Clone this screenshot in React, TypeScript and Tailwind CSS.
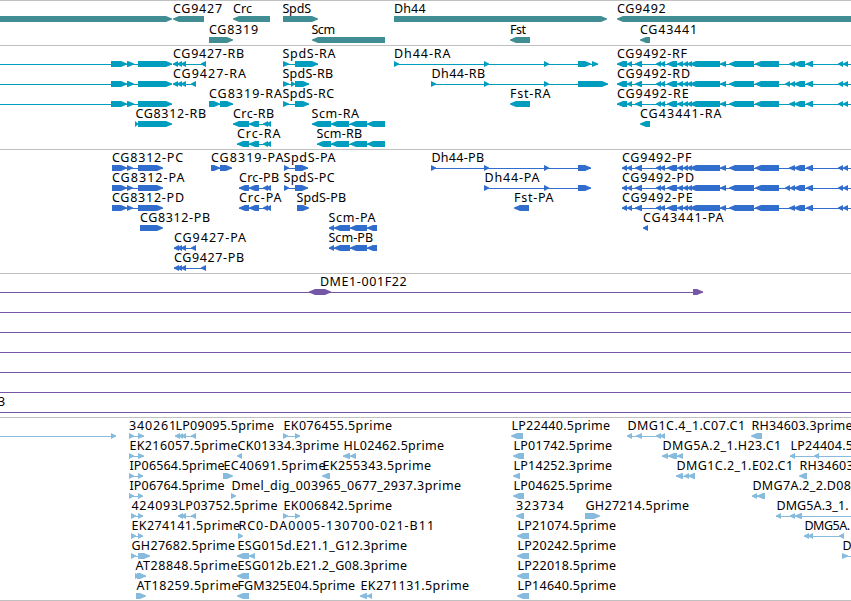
type Strand = '+' | '-' | 'both';
type Block = [number, number];

interface Feature {
  row: number;
  name?: string;
  // left and right edge of the name, in pixels
  text?: Block;
  strand: Strand;
  blocks: Block[];
}

interface TrackProps {
  color: string;
  height: number;
  rowHeight?: number;
  top?: number;
  features: Feature[];
}

const WIDTH = 851;
const EDGE: Block = [870, 880];

const f = (row: number, name: string, text: Block, strand: Strand, blocks: Block[]): Feature => ({
  row,
  name,
  text,
  strand,
  blocks,
});

const genes: Feature[] = [
  { row: 0, strand: '+', blocks: [[-10, 172]] },
  f(0, 'CG9427', [173.5, 221.5], '-', [[173, 204]]),
  f(0, 'Crc', [233.5, 251.5], '-', [[233, 270]]),
  f(0, 'SpdS', [283, 310.5], '+', [[283, 318]]),
  f(0, 'Dh44', [394.5, 425], '+', [[394, 607]]),
  f(0, 'CG9492', [617.5, 665], '-', [[617, 880]]),
  f(1, 'CG8319', [209.5, 257.5], '+', [[209, 233]]),
  f(1, 'Scm', [312, 334.5], '-', [[312, 385]]),
  f(1, 'Fst', [510.7, 525.5], '-', [[510, 530]]),
  f(1, 'CG43441', [640.5, 696.5], '-', [[640, 650]]),
];

const cg8312: Block[] = [[-20, -10], [111, 127], [127, 134], [138, 172]];
const cg9427: Block[] = [[173, 178], [177, 182], [181, 186]];
const crcTail: Block[] = [[249, 259], [263, 268], [266, 271]];
const scmTail: Block[] = [[331, 349], [350, 367], [367, 385]];
const cg9492Mid: Block[] = [
  [627, 632], [635, 642], [656, 661], [660, 665], [667, 677], [677, 683], [683, 688],
  [687, 692], [690, 720], [720, 726], [729, 754], [755, 779],
];
const cg9492End: Block[] = [[794, 805], [806, 813], [838, 843], [843, 848], EDGE];
const cg9492F: Block[] = [...cg9492Mid, [789, 795], ...cg9492End];
const cg9492D: Block[] = [...cg9492Mid, [785, 790], [790, 795], ...cg9492End];

const transcripts: Feature[] = [
  { row: 0, strand: '+', blocks: cg8312 },
  { row: 1, strand: '+', blocks: cg8312 },
  { row: 2, strand: '+', blocks: cg8312 },
  f(0, 'CG9427-RB', [173.5, 243.5], '-', [...cg9427, [201, 206]]),
  f(1, 'CG9427-RA', [173.5, 245.5], '-', [...cg9427, [191, 196]]),
  f(2, 'CG8319-RA', [209.5, 281.5], '+', [[209, 220], [220, 233]]),
  f(3, 'CG8312-RB', [136, 205.5], '+', [[135, 138], [138, 172]]),
  f(3, 'Crc-RB', [233.5, 273.5], '-', [[233, 249], ...crcTail]),
  f(4, 'Crc-RA', [237.5, 280], '-', [[237, 249], ...crcTail]),
  f(0, 'SpdS-RA', [283, 335], '+', [[283, 289], [295, 318]]),
  f(1, 'SpdS-RB', [283, 332.5], '+', [[283, 289], [291, 295], [295, 309]]),
  f(2, 'SpdS-RC', [283, 333.5], '+', [[283, 289], [295, 309]]),
  f(3, 'Scm-RA', [312, 358.5], '-', [[312, 331], ...scmTail]),
  f(4, 'Scm-RB', [317, 361.5], '-', [[317, 331], ...scmTail]),
  f(0, 'Dh44-RA', [394.5, 450], '+', [[394, 399], [484, 489], [544, 549], [578, 591], [592, 598]]),
  f(1, 'Dh44-RB', [432, 484.5], '+', [[431, 436], [484, 489], [544, 549], [578, 608]]),
  f(2, 'Fst-RA', [510.7, 550], '-', [[510, 530]]),
  f(0, 'CG9492-RF', [617.5, 686.5], '-', [[617, 627], ...cg9492F]),
  f(1, 'CG9492-RD', [617.5, 689.5], '-', [[617, 627], ...cg9492D]),
  f(2, 'CG9492-RE', [617.5, 688], '-', [[617, 627], ...cg9492F]),
  f(3, 'CG43441-RA', [640.5, 721], '-', [[640, 650]]),
];

const cg8312P: Block[] = [[112, 127], [127, 133], [138, 163]];
const cg9427P: Block[] = [[174, 179], [177, 182], [181, 186]];
const scmP: Block[] = [[329, 334], [334, 350], [350, 367], [367, 377]];

const proteins: Feature[] = [
  f(0, 'CG8312-PC', [112.5, 182.5], '+', cg8312P),
  f(1, 'CG8312-PA', [112.5, 184], '+', cg8312P),
  f(2, 'CG8312-PD', [112.5, 183.5], '+', cg8312P),
  f(3, 'CG8312-PB', [140.5, 209.5], '+', [[140, 163]]),
  f(4, 'CG9427-PA', [174.5, 245.5], '-', [...cg9427P, [191, 196]]),
  f(5, 'CG9427-PB', [174.5, 243.5], '-', [...cg9427P, [201, 206]]),
  f(0, 'CG8319-PA', [211.5, 283], '+', [[211, 220], [220, 232]]),
  f(1, 'Crc-PB', [239.5, 278.5], '-', [[239, 249], ...crcTail]),
  f(2, 'Crc-PA', [239.5, 281], '-', [[239, 249], ...crcTail]),
  f(0, 'SpdS-PA', [284, 335], '+', [[284, 289], [295, 308]]),
  f(1, 'SpdS-PC', [284, 334], '+', [[284, 289], [295, 308]]),
  f(2, 'SpdS-PB', [297, 345.5], '+', [[297, 309]]),
  f(3, 'Scm-PA', [329, 375], '-', scmP),
  f(4, 'Scm-PB', [329, 372.5], '-', scmP),
  f(0, 'Dh44-PB', [432, 483.5], '+', [[431, 436], [484, 489], [544, 549], [578, 591]]),
  f(1, 'Dh44-PA', [485, 539], '+', [[484, 489], [544, 549], [578, 591]]),
  f(2, 'Fst-PA', [514.7, 553], '-', [[514, 529]]),
  f(0, 'CG9492-PF', [622.5, 691], '-', [[622, 627], ...cg9492F]),
  f(1, 'CG9492-PD', [622.5, 693.5], '-', [[622, 627], ...cg9492D]),
  f(2, 'CG9492-PE', [622.5, 692], '-', [[622, 627], ...cg9492F]),
  f(3, 'CG43441-PA', [643.5, 723], '-', [[643, 648]]),
];

const span: Block[] = [[-20, -10], EDGE];

const clones: Feature[] = [
  { row: 0, strand: '+', blocks: [[-20, -10], [693, 703]] },
  f(0, 'DME1-001F22', [320.5, 406], 'both', [[309, 331]]),
  { row: 1, strand: '+', blocks: span },
  { row: 2, strand: '+', blocks: span },
  { row: 3, strand: '+', blocks: span },
  { row: 4, strand: '+', blocks: span },
  { row: 5, strand: '+', blocks: span },
  f(6, '3', [-1.5, 5], '+', span),
];

const ests: Feature[] = [
  { row: 0, strand: '+', blocks: [[-20, -10], [111, 116]] },
  f(0, '340261', [129.5, 175.5], '+', [[129, 134], [138, 144]]),
  f(0, 'LP09095.5prime', [176, 273.5], '-', [[175, 180], [179, 183], [182, 186], [191, 196]]),
  f(0, 'EK076455.5prime', [284, 391.5], '+', [[283, 288], [295, 300]]),
  f(0, 'LP22440.5prime', [512, 609.5], '-', [[511, 523]]),
  f(0, 'DMG1C.4_1.C07.C1', [628, 744.5], '-', [[627, 632], [636, 642], [656, 661], [660, 665]]),
  f(0, 'RH34603.3prime', [752, 852], '-', [[751, 762]]),

  f(1, 'EK216057.5prime', [130, 237], '+', [[129, 134], [138, 144]]),
  f(1, 'CK01334.3prime', [238, 338.5], '-', [[237, 242]]),
  f(1, 'HL02462.5prime', [344, 443.5], '-', [[343, 350], [350, 356]]),
  f(1, 'LP01742.5prime', [514, 611.5], '-', [[513, 524]]),
  f(1, 'DMG5A.2_1.H23.C1', [663, 780.5], '-', [[662, 668], [668, 677], [677, 683]]),
  f(1, 'LP24404.5prime', [791, 888.5], '-', [[790, 795], [814, 819], EDGE]),

  f(2, 'IP06564.5prime', [130, 224], '+', [[129, 134], [138, 143]]),
  f(2, 'EC40691.5prime', [224, 325], '+', [[223, 233]]),
  f(2, 'EK255343.5prime', [323, 430.5], '-', [[322, 330]]),
  f(2, 'LP14252.3prime', [514, 611.5], '-', [[513, 520]]),
  f(2, 'DMG1C.2_1.E02.C1', [677, 792.5], '-', [[676, 683], [684, 689], [688, 695]]),
  f(2, 'RH34603.5prime', [800, 900], '-', [[799, 807]]),

  f(3, 'IP06764.5prime', [130, 224], '+', [[129, 134], [138, 143]]),
  f(3, 'Dmel_dig_003965_0677_2937.3prime', [232, 460.5], '+', [[231, 236]]),
  f(3, 'LP04625.5prime', [514, 611.5], '-', [[513, 524]]),
  f(3, 'DMG7A.2_2.D08.C1', [753, 869], '-', [[752, 757], [757, 765]]),

  f(4, '424093', [132, 177.5], '+', [[131, 136], [138, 143]]),
  f(4, 'LP03752.5prime', [179, 277], '-', [[178, 183], [181, 186], [191, 196]]),
  f(4, 'EK006842.5prime', [284, 391.5], '+', [[283, 288], [295, 300]]),
  f(4, '323734', [516.5, 563], '-', [[516, 524]]),
  f(4, 'GH27214.5prime', [586, 688.5], '+', [[585, 600]]),
  f(4, 'DMG5A.3_1.', [777, 848], '-', [[776, 781], [790, 795], [795, 802], EDGE]),

  f(5, 'EK274141.5prime', [132, 239.5], '+', [[131, 136], [138, 143]]),
  f(5, 'RC0-DA0005-130700-021-B11', [239, 433.5], '+', [[238, 243]]),
  f(5, 'LP21074.5prime', [518, 615.5], '-', [[517, 529]]),
  f(5, 'DMG5A.', [805, 849.5], '-', [[804, 809], [808, 813], [839, 844]]),

  f(6, 'GH27682.5prime', [132, 234.5], '+', [[131, 136], [138, 150]]),
  f(6, 'ESG015d.E21.1_G12.3prime', [238, 406.5], '-', [[237, 249], [249, 255]]),
  f(6, 'LP20242.5prime', [518, 615.5], '-', [[517, 529]]),
  f(6, 'D', [843, 851], '+', [[842, 848], EDGE]),

  f(7, 'AT28848.5prime', [136, 237], '+', [[135, 140], [137, 146]]),
  f(7, 'ESG012b.E21.2_G08.3prime', [238, 406.5], '-', [[237, 249]]),
  f(7, 'LP22018.5prime', [518, 615.5], '-', [[517, 529]]),

  f(8, 'AT18259.5prime', [137, 238], '+', [[136, 146]]),
  f(8, 'FGM325E04.5prime', [238, 354.5], '-', [[237, 249]]),
  f(8, 'EK271131.5prime', [361, 468.5], '-', [[360, 367], [367, 372]]),
  f(8, 'LP14640.5prime', [518, 615.5], '-', [[517, 529]]),
];

// Box that narrows to a rounded point in the direction of the strand
function blockPoints([a, b]: Block, y: number, strand: Strand) {
  const tip = Math.min(6, b - a);
  const near = tip * 0.4;
  const left = `${a + tip},${y + 6} ${a + near},${y + 4.6} ${a},${y + 3.5} ${a},${y + 2.5} ${a + near},${y + 1.4} ${a + tip},${y}`;
  const right = `${b - tip},${y} ${b - near},${y + 1.4} ${b},${y + 2.5} ${b},${y + 3.5} ${b - near},${y + 4.6} ${b - tip},${y + 6}`;
  if (strand === '+') {
    return `${a},${y + 6} ${a},${y} ${right}`;
  }
  if (strand === '-') {
    return `${left} ${b},${y} ${b},${y + 6}`;
  }
  return `${left} ${right}`;
}

function FeatureGlyph({ feature, y }: { feature: Feature; y: number }) {
  const { name, text, strand, blocks } = feature;
  const start = blocks[0][0];
  const end = blocks[blocks.length - 1][1];

  return (
    <g>
      {blocks.length > 1 && <rect x={start} y={y + 3} width={end - start} height={1} />}
      {blocks.map((block, i) => (
        <polygon key={i} points={blockPoints(block, y, strand)} />
      ))}
      {name && text && (
        <text
          x={text[0] - 0.6}
          y={y - 3}
          textLength={text[1] - text[0] + 1.2}
          className="fill-black"
        >
          {name}
        </text>
      )}
    </g>
  );
}

function Track({ color, height, rowHeight = 20, top = 15, features }: TrackProps) {
  return (
    <section className="border-t border-[#c0c0c0]">
      <svg
        width={WIDTH}
        height={height}
        fill={color}
        className="block overflow-hidden font-['Noto_Sans',sans-serif] text-[12.5px]"
      >
        {features.map((feature, i) => (
          <FeatureGlyph key={i} feature={feature} y={top + feature.row * rowHeight} />
        ))}
      </svg>
    </section>
  );
}

export default function App() {
  return (
    <main className="flex h-[601px] w-[851px] flex-col overflow-hidden border-b border-[#c0c0c0] bg-white">
      <Track color="#408e93" height={44} rowHeight={21} features={genes} />
      <Track color="#009dbf" height={103} features={transcripts} />
      <Track color="#306dcd" height={123} features={proteins} />
      <Track color="#7656a6" height={143} features={clones} />
      <Track color="#87bbdd" height={182} features={ests} />
    </main>
  );
}
